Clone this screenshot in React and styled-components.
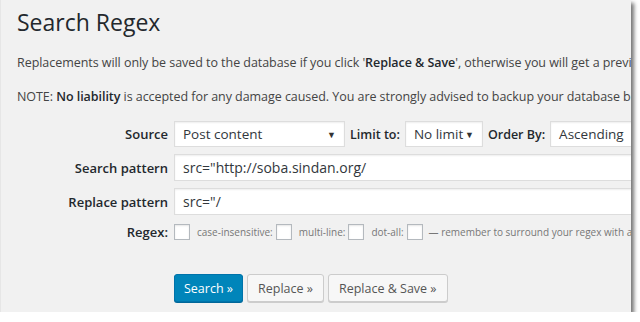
import styled, { createGlobalStyle } from "styled-components";

const Global = createGlobalStyle`
  html, body { margin: 0; background: #fff; }
  body { font-family: "Open Sans", "Noto Sans", sans-serif; color: #444; }
`

const Panel = styled.div`
  width: 631px;
  height: 312px;
  background: #f1f1f1;
  overflow: hidden;
  box-shadow: 3px 3px 4px rgba(0, 0, 0, 0.55);
  border-left: 1px solid #e6e6e6;
  box-sizing: border-box;
  white-space: nowrap;
`

const Title = styled.h1`
  margin: 0;
  padding: 7px 0 0 16px;
  font-size: 23px;
  font-weight: 400;
  line-height: 30px;
  color: #23282d;
`

const Note = styled.p`
  margin: ${p => p.$top}px 0 0 16px;
  font-size: 12.5px;
  letter-spacing: -0.05px;
  line-height: 19px;
  color: #444;
  b { font-weight: 600; color: #23282d; }
`

const Form = styled.div`
  display: grid;
  grid-template-columns: 167px max-content;
  column-gap: 6px;
  row-gap: 7px;
  margin-top: 15px;
  align-items: center;
`

const Label = styled.div`
  text-align: right;
  font-size: 13px;
  font-weight: 600;
  color: #23282d;
  line-height: 20px;
`

const Field = styled.div`
  display: flex;
  align-items: center;
  gap: ${p => p.$gap || 5}px;
`

const Select = styled.div`
  width: ${p => p.$w}px;
  height: 26px;
  box-sizing: border-box;
  display: flex;
  align-items: center;
  justify-content: space-between;
  padding: 0 8px 0 8px;
  background: #fff;
  border: 1px solid #ddd;
  box-shadow: inset 0 1px 2px rgba(0, 0, 0, 0.07);
  font-size: 13.5px;
  color: #32373c;
  span.arrow { font-size: 9px; color: #333; }
`

const Inline = styled.span`
  font-size: 12.5px;
  font-weight: 600;
  color: #23282d;
`

const Input = styled.div`
  width: 600px;
  height: 27px;
  box-sizing: border-box;
  padding: 0 8px;
  display: flex;
  align-items: center;
  background: #fff;
  border: 1px solid #ddd;
  box-shadow: inset 0 1px 2px rgba(0, 0, 0, 0.07);
  font-size: 14px;
  color: #32373c;
`

const Check = styled.span`
  width: 16px;
  height: 16px;
  box-sizing: border-box;
  background: #fff;
  border: 1px solid #b4b9be;
  box-shadow: inset 0 1px 2px rgba(0, 0, 0, 0.1);
  margin-right: ${p => p.$mr || 0}px;
`

const Small = styled.span`
  font-size: 10px;
  color: #777;
`

const Buttons = styled.div`
  display: flex;
  gap: 4px;
  margin: 32px 0 0 173px;
`

const Button = styled.button`
  height: 28px;
  padding: 0 ${p => (p.$primary ? 9 : 10)}px;
  border-radius: 3px;
  font-family: inherit;
  font-size: 12.5px;
  cursor: pointer;
  background: ${p => (p.$primary ? "#0085ba" : "#f7f7f7")};
  border: 1px solid ${p => (p.$primary ? "#0073aa" : "#ccc")};
  color: ${p => (p.$primary ? "#fff" : "#555")};
  box-shadow: 0 1px 0 ${p => (p.$primary ? "#006799" : "#ccc")};
`

export default function App() {
  return (
    <Panel>
      <Global />
      <Title>Search Regex</Title>
      <Note $top={16}>
        Replacements will only be saved to the database if you click '<b>Replace &amp; Save</b>', otherwise you will get a preview of the results.
      </Note>
      <Note $top={15}>
        NOTE: <b>No liability</b> is accepted for any damage caused. You are strongly advised to backup your database before making any changes.
      </Note>
      <Form>
        <Label>Source</Label>
        <Field>
          <Select $w={171}>Post content<span className="arrow">▼</span></Select>
          <Inline>Limit to:</Inline>
          <Select $w={78}>No limit<span className="arrow">▼</span></Select>
          <Inline>Order By:</Inline>
          <Select $w={160}>Ascending<span className="arrow">▼</span></Select>
        </Field>
        <Label>Search pattern</Label>
        <Input>src="http://soba.sindan.org/</Input>
        <Label>Replace pattern</Label>
        <Input>src="/</Input>
        <Label>Regex:</Label>
        <Field $gap={3}>
          <Check $mr={4} />
          <Small>case-insensitive:</Small>
          <Check $mr={4} />
          <Small>multi-line:</Small>
          <Check $mr={4} />
          <Small>dot-all:</Small>
          <Check $mr={3} />
          <Small>— remember to surround your regex with a delimiter!</Small>
        </Field>
      </Form>
      <Buttons>
        <Button $primary>Search »</Button>
        <Button>Replace »</Button>
        <Button>Replace &amp; Save »</Button>
      </Buttons>
    </Panel>
  );
}
